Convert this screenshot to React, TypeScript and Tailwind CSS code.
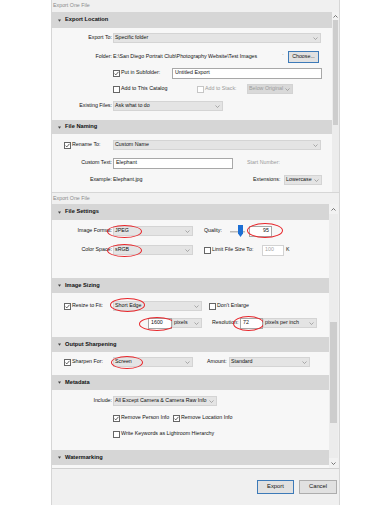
import React from "react";

type Kids = { className?: string; children?: React.ReactNode };

const Chevron = () => (
  <svg width="5" height="3" viewBox="0 0 5 3" className="shrink-0">
    <polyline points="0.5,0.5 2.5,2.5 4.5,0.5" fill="none" stroke="#8c8c8c" strokeWidth="0.7" />
  </svg>
);

// red annotation ellipse drawn over a control
const Ring = ({ className = "" }: { className?: string }) => (
  <span className={`pointer-events-none absolute rounded-[50%] border border-[#e8262b] ${className}`} />
);

function Select({ value, className = "", muted = false, children }: { value: string; muted?: boolean } & Kids) {
  return (
    <div
      className={`relative flex h-[10px] shrink-0 items-center justify-between border pl-[1px] pr-[2px] ${
        muted ? "border-[#d3d3d3] bg-[#d9d9d9] text-[#9b9b9b]" : "border-[#d4d4d4] bg-[#e4e4e4]"
      } ${className}`}
    >
      <span className="whitespace-nowrap">{value}</span>
      <Chevron />
      {children}
    </div>
  );
}

function Field({ value, className = "", muted = false, right = false, children }: { value: string; muted?: boolean; right?: boolean } & Kids) {
  return (
    <div
      className={`relative flex h-[11px] shrink-0 items-center border bg-white px-[2px] ${
        muted ? "border-[#d2d2d2] text-[#a3a3a3]" : "border-[#a8a8a8]"
      } ${right ? "justify-end" : ""} ${className}`}
    >
      {value}
      {children}
    </div>
  );
}

function Check({ on = false, muted = false }: { on?: boolean; muted?: boolean }) {
  return (
    <span
      className={`flex h-[7px] w-[7px] shrink-0 items-center justify-center border bg-white ${
        muted ? "border-[#c6c6c6]" : "border-[#666]"
      }`}
    >
      {on && (
        <svg width="5" height="5" viewBox="0 0 5 5">
          <polyline points="0.5,2.6 1.8,3.9 4.5,0.8" fill="none" stroke="#333" strokeWidth="0.8" />
        </svg>
      )}
    </span>
  );
}

function Header({ title, className = "h-[15px]" }: { title: string } & Kids) {
  return (
    <div className={`flex items-center bg-[#d6d6d6] pl-[6px] text-[5.7px] font-bold text-[#111] ${className}`}>
      <svg width="3" height="3" viewBox="0 0 4 3" className="mr-[4px] shrink-0">
        <path d="M0 0H4L2 3Z" fill="#444" />
      </svg>
      {title}
    </div>
  );
}

const Row = ({ className = "", children }: Kids) => (
  <div className={`flex h-[16px] items-center ${className}`}>{children}</div>
);

const Label = ({ children }: Kids) => (
  <span className="w-[61px] shrink-0 whitespace-nowrap pr-[1px] text-right">{children}</span>
);

const UpArrow = () => (
  <svg width="5" height="3" viewBox="0 0 5 3">
    <polyline points="0.5,2.5 2.5,0.5 4.5,2.5" fill="none" stroke="#555" strokeWidth="0.8" />
  </svg>
);

const DownArrow = () => (
  <svg width="5" height="3" viewBox="0 0 5 3">
    <polyline points="0.5,0.5 2.5,2.5 4.5,0.5" fill="none" stroke="#555" strokeWidth="0.8" />
  </svg>
);

function TopDialog() {
  return (
    <div className="flex w-[289px] flex-col border-x border-b border-[#d6d6d6] bg-[#f0f0f0]">
      <div className="flex h-[12px] items-center pl-[1px] text-[#8a8a8a]">Export One File</div>
      <div className="flex">
        <div className="w-[280px] bg-[#f7f7f7]">
          <Header title="Export Location" className="h-[16px]" />
          <div className="pb-[6px] pt-[2px]">
            <Row>
              <Label>Export To:</Label>
              <Select value="Specific folder" className="w-[208px]" />
            </Row>
            <Row className="mt-[3px]">
              <Label>Folder:</Label>
              <span className="w-[169px] whitespace-nowrap">{"E:\\San Diego Portrait Club\\Photography Website\\Test Images"}</span>
              <span className="mb-[4px] w-[6px] text-[#555]">·</span>
              <div className="flex h-[12px] w-[31px] items-center justify-center border border-[#3d7ab8] bg-[#e1e1e1]">
                Choose...
              </div>
            </Row>
            <Row className="pl-[61px]">
              <Check on />
              <span className="ml-[1px] w-[51px] whitespace-nowrap">Put in Subfolder:</span>
              <Field value="Untitled Export" className="w-[150px]" />
            </Row>
            <Row className="pl-[61px]">
              <Check />
              <span className="ml-[1px] w-[76px] whitespace-nowrap">Add to This Catalog</span>
              <Check muted />
              <span className="ml-[1px] w-[42px] whitespace-nowrap text-[#9a9a9a]">Add to Stack:</span>
              <Select value="Below Original" muted className="w-[46px]" />
            </Row>
            <Row className="mt-[1px]">
              <Label>Existing Files:</Label>
              <Select value="Ask what to do" className="w-[110px]" />
            </Row>
          </div>
          <Header title="File Naming" className="h-[14px]" />
          <div className="pb-[4px] pt-[3px]">
            <Row className="pl-[12px]">
              <Check on />
              <span className="ml-[1px] w-[41px] whitespace-nowrap">Rename To:</span>
              <Select value="Custom Name" className="w-[208px]" />
            </Row>
            <Row className="mt-[2px]">
              <Label>Custom Text:</Label>
              <Field value="Elephant" className="w-[120px]" />
              <span className="ml-[14px] whitespace-nowrap text-[#9a9a9a]">Start Number:</span>
            </Row>
            <Row className="mt-[1px]">
              <Label>Example:</Label>
              <span className="w-[140px]">Elephant.jpg</span>
              <span className="w-[31px] whitespace-nowrap">Extensions:</span>
              <Select value="Lowercase" className="w-[38px]" />
            </Row>
          </div>
        </div>
        <div className="flex w-[7px] flex-col bg-[#ececec]">
          <div className="flex h-[8px] items-center justify-center bg-[#f2f2f2]">
            <UpArrow />
          </div>
          <div className="mx-[1px] h-[105px] bg-[#cdcdcd]" />
        </div>
      </div>
    </div>
  );
}

function BottomDialog() {
  return (
    <div className="flex w-[289px] flex-col border-x border-[#d6d6d6] bg-[#f0f0f0]">
      <div className="flex h-[11px] items-center pl-[1px] text-[#8a8a8a]">Export One File</div>
      <div className="flex border-b border-[#d0d0d0]">
        <div className="w-[277px] bg-[#f7f7f7]">
          <Header title="File Settings" className="h-[16px]" />
          <div className="pb-[20px] pt-[3px]">
            <Row>
              <Label>Image Format:</Label>
              <Select value="JPEG" className="w-[80px]">
                <Ring className="-left-[7px] -top-[2px] h-[13px] w-[35px]" />
              </Select>
              <span className="ml-[11px] w-[26px]">Quality:</span>
              <svg width="15" height="12" viewBox="0 0 15 12" className="shrink-0">
                <rect x="0" y="6" width="15" height="1.5" fill="#b9b9b9" />
                <path d="M8 0H13V8.5L10.5 12L8 8.5Z" fill="#1c6fd4" />
              </svg>
              <Field value="95" right className="ml-[4px] w-[23px]">
                <Ring className="-left-[3px] -top-[4px] h-[15px] w-[36px]" />
              </Field>
            </Row>
            <Row className="mt-[3px]">
              <Label>Color Space:</Label>
              <Select value="sRGB" className="w-[80px]">
                <Ring className="-left-[7px] -top-[2px] h-[13px] w-[35px]" />
              </Select>
              <span className="ml-[11px]">
                <Check />
              </span>
              <span className="ml-[1px] w-[50px] whitespace-nowrap">Limit File Size To:</span>
              <Field value="100" muted className="w-[22px]" />
              <span className="ml-[2px]">K</span>
            </Row>
          </div>
          <Header title="Image Sizing" />
          <div className="pb-[6px] pt-[5px]">
            <Row className="pl-[12px]">
              <Check on />
              <span className="ml-[1px] w-[41px] whitespace-nowrap">Resize to Fit:</span>
              <Select value="Short Edge" className="w-[89px]">
                <Ring className="-left-[4px] -top-[4px] h-[14px] w-[35px]" />
              </Select>
              <span className="ml-[7px]">
                <Check />
              </span>
              <span className="ml-[1px] whitespace-nowrap">Don't Enlarge</span>
            </Row>
            <Row className="mt-[1px] pl-[96px]">
              <Field value="1600" className="w-[24px]">
                <Ring className="-left-[10px] -top-[2px] h-[14px] w-[36px]" />
              </Field>
              <Select value="pixels" className="w-[30px]" />
              <span className="ml-[10px] w-[28px] whitespace-nowrap">Resolution:</span>
              <Field value="72" className="w-[23px]">
                <Ring className="-left-[8px] -top-[3px] h-[15px] w-[31px]" />
              </Field>
              <Select value="pixels per inch" className="w-[54px]" />
            </Row>
          </div>
          <Header title="Output Sharpening" />
          <div className="pb-[5px] pt-[2px]">
            <Row className="pl-[12px]">
              <Check on />
              <span className="ml-[1px] w-[41px] whitespace-nowrap">Sharpen For:</span>
              <Select value="Screen" className="w-[80px]">
                <Ring className="-left-[3px] -top-[2px] h-[13px] w-[32px]" />
              </Select>
              <span className="ml-[14px] w-[22px]">Amount:</span>
              <Select value="Standard" className="w-[81px]" />
            </Row>
          </div>
          <Header title="Metadata" />
          <div className="pb-[8px] pt-[3px]">
            <Row>
              <Label>Include:</Label>
              <Select value="All Except Camera & Camera Raw Info" className="w-[104px]" />
            </Row>
            <Row className="mt-[1px] pl-[61px]">
              <Check on />
              <span className="ml-[1px] w-[52px] whitespace-nowrap">Remove Person Info</span>
              <Check on />
              <span className="ml-[1px] whitespace-nowrap">Remove Location Info</span>
            </Row>
            <Row className="h-[14px] pl-[61px]">
              <Check />
              <span className="ml-[1px] whitespace-nowrap">Write Keywords as Lightroom Hierarchy</span>
            </Row>
          </div>
          <Header title="Watermarking" />
          <div className="h-[3px]" />
        </div>
        <div className="flex w-[9px] flex-col bg-[#ececec]">
          <div className="flex h-[10px] items-center justify-center bg-[#f2f2f2]">
            <UpArrow />
          </div>
          <div className="h-[108px]" />
          <div className="mx-[1px] h-[101px] bg-[#cdcdcd]" />
          <div className="flex-1" />
          <div className="flex h-[10px] items-center justify-center bg-[#f2f2f2]">
            <DownArrow />
          </div>
        </div>
      </div>
      <div className="flex justify-end gap-[5px] border-b-2 border-[#5aa3e4] pb-[11px] pr-[2px] pt-[11px] text-[5.8px]">
        <div className="flex h-[14px] w-[37px] items-center justify-center border border-[#3d7ab8] bg-[#e1e1e1]">Export</div>
        <div className="flex h-[14px] w-[38px] items-center justify-center border border-[#adadad] bg-[#e1e1e1]">Cancel</div>
      </div>
    </div>
  );
}

export default function App() {
  return (
    <div className="min-h-screen bg-white pl-[51px] font-['Liberation_Sans',Arial,sans-serif] text-[5.3px] leading-none text-[#111]">
      <TopDialog />
      <BottomDialog />
    </div>
  );
}
